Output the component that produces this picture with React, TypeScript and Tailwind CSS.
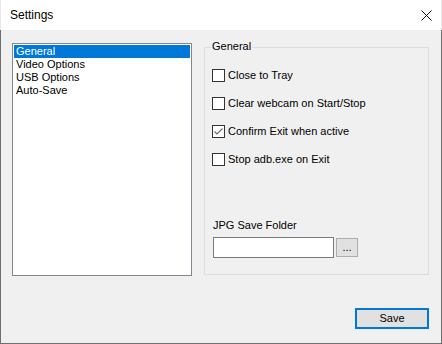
import React from "react";

const font = { fontFamily: '"Liberation Sans", Arial, sans-serif' };

function CheckBox({ checked, label }: { checked?: boolean; label: string }) {
  return (
    <div className="flex items-center h-[13px]">
      <div className="w-[13px] h-[13px] border border-[#333333] bg-white flex items-center justify-center shrink-0">
        {checked && (
          <svg width="11" height="11" viewBox="0 0 11 11">
            <path d="M1.5 5.5 L4 8 L9.5 2.5" fill="none" stroke="#6a6a6a" strokeWidth="1.1" />
          </svg>
        )}
      </div>
      <span className="ml-[3px] text-[11px] leading-[13px] text-black whitespace-nowrap">{label}</span>
    </div>
  );
}

export default function App() {
  const items = ["General", "Video Options", "USB Options", "Auto-Save"];
  return (
    <div className="w-[442px] h-[344px] flex flex-col overflow-hidden" style={font}>
      <div className="h-[30px] bg-white flex items-center justify-between border-l border-r border-[#e8e8e8]">
        <span className="ml-[9px] text-[12px] text-black">Settings</span>
        <svg className="mr-[9px]" width="11" height="11" viewBox="0 0 11 11">
          <path d="M0.5 0.5 L10.5 10.5 M10.5 0.5 L0.5 10.5" stroke="#111111" strokeWidth="1" />
        </svg>
      </div>
      <div className="flex-1 bg-[#f0f0f0] border-l border-r border-b border-[#6f6f6f] pl-[11px] pt-[13px] flex flex-col">
        <div className="flex">
          <div className="w-[180px] h-[233px] border border-[#828790] bg-white p-[1px]">
            {items.map((it, i) => (
              <div
                key={it}
                className={
                  "h-[13px] px-[2px] text-[11px] leading-[13px] whitespace-nowrap " +
                  (i === 0 ? "bg-[#0078d7] text-white" : "text-black")
                }
              >
                {it}
              </div>
            ))}
          </div>
          <div className="ml-[12px] mt-[4px] w-[225px] h-[228px] border border-[#dcdcdc] relative">
            <span className="absolute left-[6px] top-[-8px] px-[1px] bg-[#f0f0f0] text-[11px] leading-[13px] text-black">
              General
            </span>
            <div className="pl-[7px] pt-[21px] flex flex-col gap-[15px]">
              <CheckBox label="Close to Tray" />
              <CheckBox label="Clear webcam on Start/Stop" />
              <CheckBox checked label="Confirm Exit when active" />
              <CheckBox label="Stop adb.exe on Exit" />
            </div>
            <div className="pl-[8px] mt-[53px] text-[11px] leading-[13px] text-black">JPG Save Folder</div>
            <div className="pl-[8px] mt-[5px] flex items-center">
              <div className="w-[121px] h-[21px] border border-[#7a7a7a] bg-white" />
              <div className="ml-[2px] w-[22px] h-[19px] border border-[#adadad] bg-[#e1e1e1] flex items-center justify-center text-[11px] leading-[11px] text-black">
                ...
              </div>
            </div>
          </div>
        </div>
        <div className="flex justify-end pr-[12px] mt-[32px]">
          <div className="w-[74px] h-[21px] border-2 border-[#0078d7] bg-[#e1e1e1] flex items-center justify-center text-[11px] text-black">
            Save
          </div>
        </div>
      </div>
    </div>
  );
}
